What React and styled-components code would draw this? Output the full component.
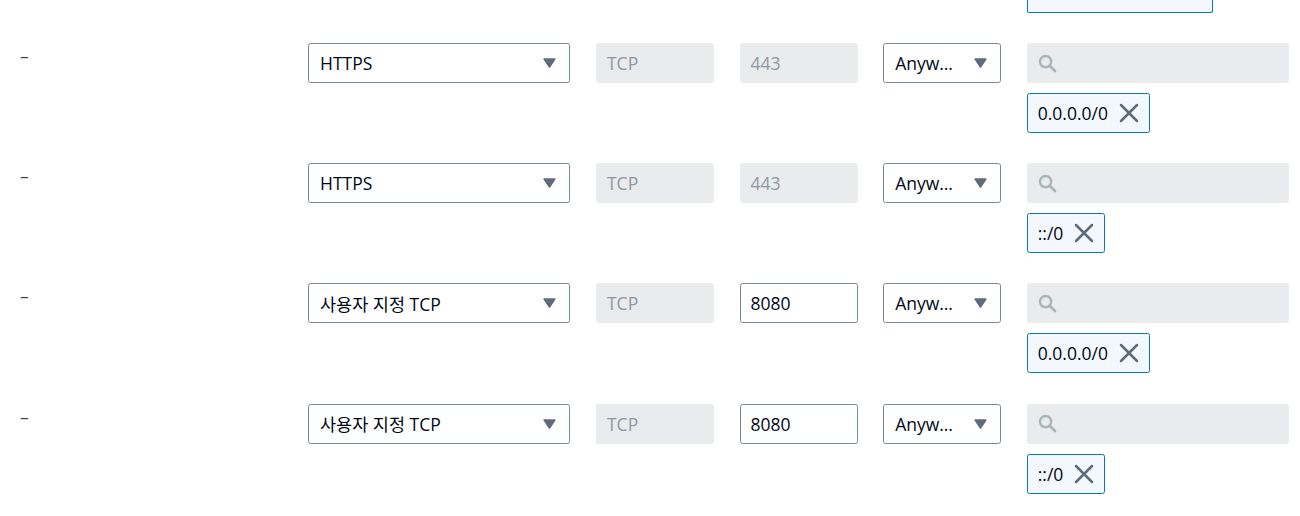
import React from "react";
import styled, { createGlobalStyle } from "styled-components";

const GlobalStyle = createGlobalStyle`
  html, body {
    margin: 0;
    padding: 0;
    background: #ffffff;
    overflow: hidden;
  }
  body {
    font-family: "Open Sans", "Noto Sans CJK KR", sans-serif;
    font-size: 17.5px;
    color: #000716;
  }
`;

const List = styled.div`
  display: flex;
  flex-direction: column;
  row-gap: 30.16px;
  padding-left: 20px;
`;

const Row = styled.div`
  display: grid;
  grid-template-columns: 262.4px 262.4px 118px 118px 118px 262.4px;
  column-gap: 25.6px;
  align-items: start;
`;

const TailCell = styled.div`
  grid-column: 6;
`;

const TokenTail = styled.div`
  box-sizing: border-box;
  width: 186px;
  height: 13px;
  border: 1px solid #0972d3;
  border-top: none;
  border-radius: 0 0 2.5px 2.5px;
  background: #f2f8fd;
`;

const Dash = styled.div`
  line-height: 24px;
  padding-top: 1px;
  color: #414d5c;
`;

const Stack = styled.div`
  display: flex;
  flex-direction: column;
  align-items: flex-start;
  row-gap: 10px;
`;

const Field = styled.div`
  box-sizing: border-box;
  height: 40px;
  width: 100%;
  display: flex;
  align-items: center;
  border-radius: 2.5px;
  border: 1px solid ${(p) => (p.$disabled ? "#e9ebed" : "#7d8998")};
  background: ${(p) => (p.$disabled ? "#e9ebed" : "#ffffff")};
  color: ${(p) => (p.$disabled ? "#8d99a8" : "#000716")};
  padding: 0 12px 0 10px;
  white-space: nowrap;
`;

const SelectField = styled(Field)`
  padding: 0 13px 0 11px;
  justify-content: space-between;
`;

const SearchField = styled(Field)`
  padding-left: 10px;
`;

const Token = styled.div`
  box-sizing: border-box;
  height: 40px;
  display: inline-flex;
  align-items: center;
  column-gap: 11px;
  padding: 0 10px 0 10px;
  border: 1px solid #0972d3;
  border-radius: 2.5px;
  background: #f2f8fd;
  color: #000716;
  white-space: nowrap;
`;

const IconBox = styled.span`
  display: inline-flex;
  flex: none;
  color: ${(p) => p.$color};
`;

const Caret = () => (
  <IconBox $color="#5f6b7a">
    <svg width="13" height="10" viewBox="0 0 13 10">
      <path
        d="M1.2 1 L11.8 1 L6.5 9 Z"
        fill="currentColor"
        stroke="currentColor"
        strokeWidth="1.6"
        strokeLinejoin="round"
      />
    </svg>
  </IconBox>
);

const SearchIcon = () => (
  <IconBox $color="#a9b4b6">
    <svg width="19" height="19" viewBox="0 0 19 19" fill="none">
      <circle cx="7.6" cy="7.6" r="5.6" stroke="currentColor" strokeWidth="2.4" />
      <path d="M11.8 11.8 L17 17" stroke="currentColor" strokeWidth="2.6" strokeLinecap="round" />
    </svg>
  </IconBox>
);

const CloseIcon = () => (
  <IconBox $color="#5f6b7a">
    <svg width="20" height="20" viewBox="0 0 20 20" fill="none">
      <path d="M2 2 L18 18 M18 2 L2 18" stroke="currentColor" strokeWidth="2.5" strokeLinecap="round" />
    </svg>
  </IconBox>
);

const rows = [
  { type: "HTTPS", port: "443", portDisabled: true, cidr: "0.0.0.0/0" },
  { type: "HTTPS", port: "443", portDisabled: true, cidr: "::/0" },
  { type: "사용자 지정 TCP", port: "8080", portDisabled: false, cidr: "0.0.0.0/0" },
  { type: "사용자 지정 TCP", port: "8080", portDisabled: false, cidr: "::/0" },
];

export default function App() {
  return (
    <>
      <GlobalStyle />
      <List>
        <Row>
          <TailCell>
            <TokenTail />
          </TailCell>
        </Row>
        {rows.map((r, i) => (
          <Row key={i}>
            <Dash>–</Dash>
            <SelectField>
              <span>{r.type}</span>
              <Caret />
            </SelectField>
            <Field $disabled>TCP</Field>
            <Field $disabled={r.portDisabled}>{r.port}</Field>
            <SelectField>
              <span>Anyw…</span>
              <Caret />
            </SelectField>
            <Stack>
              <SearchField $disabled>
                <SearchIcon />
              </SearchField>
              <Token>
                <span>{r.cidr}</span>
                <CloseIcon />
              </Token>
            </Stack>
          </Row>
        ))}
      </List>
    </>
  );
}
